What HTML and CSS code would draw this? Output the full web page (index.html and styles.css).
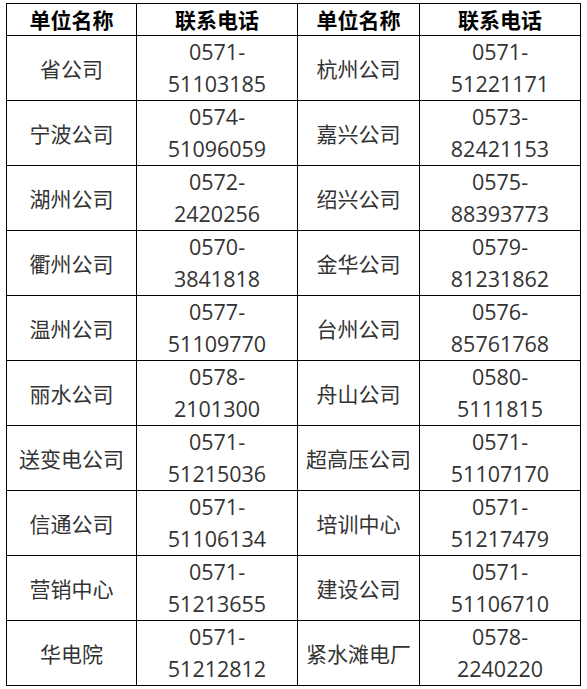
FILE: index.html
```html
<!DOCTYPE html>
<html lang="zh-CN">
<head>
<meta charset="utf-8">
<link rel="stylesheet" href="styles.css">
</head>
<body>
<table class="contacts">
  <colgroup>
    <col class="c1"><col class="c2"><col class="c3"><col class="c4">
  </colgroup>
  <thead>
    <tr><th>单位名称</th><th>联系电话</th><th>单位名称</th><th>联系电话</th></tr>
  </thead>
  <tbody>
    <tr><td>省公司</td><td>0571-<br>51103185</td><td>杭州公司</td><td>0571-<br>51221171</td></tr>
    <tr><td>宁波公司</td><td>0574-<br>51096059</td><td>嘉兴公司</td><td>0573-<br>82421153</td></tr>
    <tr><td>湖州公司</td><td>0572-<br>2420256</td><td>绍兴公司</td><td>0575-<br>88393773</td></tr>
    <tr><td>衢州公司</td><td>0570-<br>3841818</td><td>金华公司</td><td>0579-<br>81231862</td></tr>
    <tr><td>温州公司</td><td>0577-<br>51109770</td><td>台州公司</td><td>0576-<br>85761768</td></tr>
    <tr><td>丽水公司</td><td>0578-<br>2101300</td><td>舟山公司</td><td>0580-<br>5111815</td></tr>
    <tr><td>送变电公司</td><td>0571-<br>51215036</td><td>超高压公司</td><td>0571-<br>51107170</td></tr>
    <tr><td>信通公司</td><td>0571-<br>51106134</td><td>培训中心</td><td>0571-<br>51217479</td></tr>
    <tr><td>营销中心</td><td>0571-<br>51213655</td><td>建设公司</td><td>0571-<br>51106710</td></tr>
    <tr><td>华电院</td><td>0571-<br>51212812</td><td>紧水滩电厂</td><td>0578-<br>2240220</td></tr>
  </tbody>
</table>
</body>
</html>
```
FILE: styles.css
```css
html, body {
  margin: 0;
  padding: 0;
  background: #fff;
}
body {
  padding: 3px 0 0 6px;
  font-family: "Noto Sans CJK SC", "Noto Sans", sans-serif;
}
.contacts {
  border-collapse: collapse;
  table-layout: fixed;
  width: 574px;
}
.c1 { width: 130px; }
.c2 { width: 161px; }
.c3 { width: 122px; }
.c4 { width: 161px; }
.contacts th,
.contacts td {
  border: 1px solid #000;
  padding: 0;
  text-align: center;
  vertical-align: middle;
  font-size: 21px;
}
.contacts th {
  height: 31px;
  line-height: 31px;
  font-weight: bold;
  color: #000;
}
.contacts td {
  height: 64px;
  line-height: 32px;
  color: #333;
}
.contacts td:nth-child(even) {
  font-family: "Open Sans", "Noto Sans CJK SC", sans-serif;
  font-size: 21.5px;
}
```
